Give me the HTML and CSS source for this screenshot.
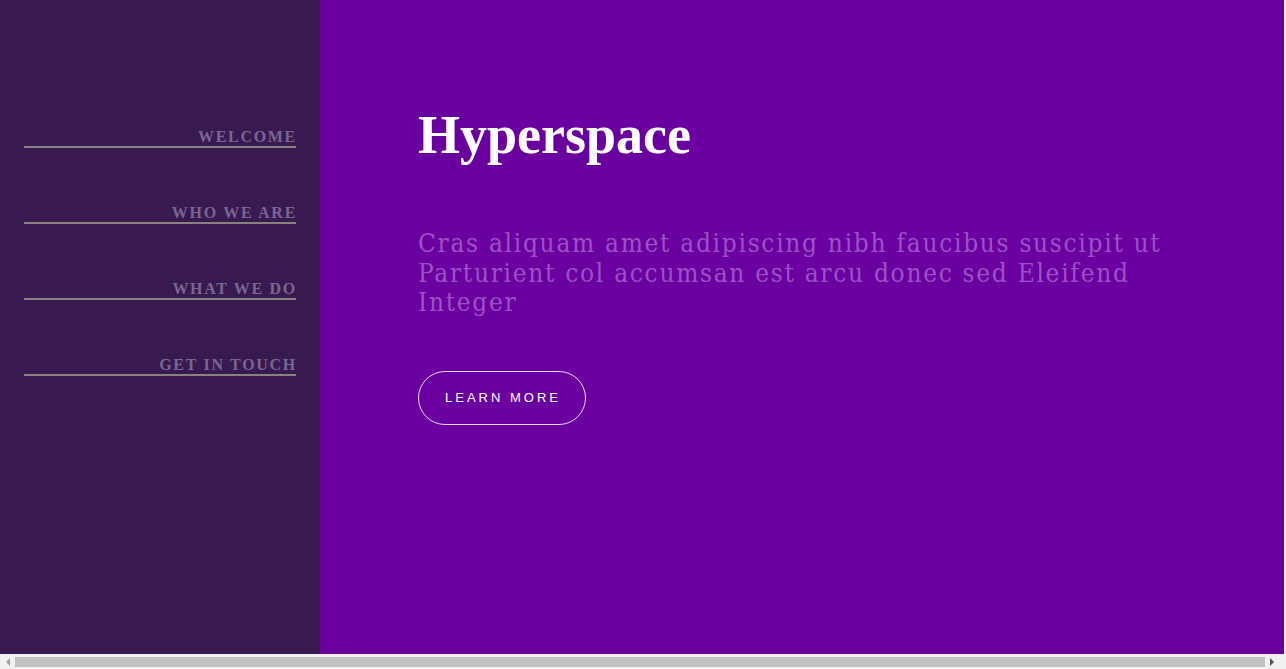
FILE: index.html
```html
<!DOCTYPE html>
<html lang="en">
<head>
<meta charset="utf-8">
<title>Hyperspace</title>
<link rel="stylesheet" href="styles.css">
</head>
<body>
<div class="page">
  <div class="content">
    <aside class="sidebar">
      <nav class="nav">
        <a class="nav-link" href="#intro"><span>Welcome</span></a>
        <a class="nav-link" href="#one"><span>Who we are</span></a>
        <a class="nav-link" href="#two"><span>What we do</span></a>
        <a class="nav-link" href="#three"><span>Get in touch</span></a>
      </nav>
    </aside>
    <main class="main">
      <h1 class="title">Hyperspace</h1>
      <p class="lead">Cras aliquam amet adipiscing nibh faucibus suscipit ut<br>Parturient col accumsan est arcu donec sed Eleifend<br>Integer</p>
      <a class="button" href="#one">Learn more</a>
    </main>
    <div class="edge"></div>
  </div>
  <div class="hscroll" aria-hidden="true">
    <div class="arrow-btn"><span class="arrow arrow-left"></span></div>
    <div class="track"><div class="thumb"></div></div>
    <div class="arrow-btn arrow-btn-right"><span class="arrow arrow-right"></span></div>
  </div>
</div>
</body>
</html>
```
FILE: styles.css
```css
html, body {
  height: 100%;
}
body {
  margin: 0;
  background: #f0f0f0;
  overflow: hidden;
}
.page {
  display: grid;
  grid-template-rows: 1fr 15px;
  height: 100%;
}
.content {
  display: grid;
  grid-template-columns: 320px 1fr 2px;
  min-height: 0;
}
.edge {
  background: #f0f0f0;
}
.sidebar {
  background: #381a50;
  padding: 129px 24px 0;
}
.nav {
  display: flex;
  flex-direction: column;
  gap: 57px;
}
.nav-link {
  display: block;
  text-align: right;
  font-family: "Liberation Serif", "Times New Roman", serif;
  font-weight: bold;
  font-size: 16px;
  line-height: 16px;
  letter-spacing: 1.7px;
  text-transform: uppercase;
  color: #7a6692;
  text-decoration: none;
  padding-bottom: 1px;
  border-bottom: 2px solid #87837f;
}
.nav-link span {
  margin-right: -1px;
}
.main {
  background: #6b00a1;
  padding: 108px 0 0 98px;
  display: flex;
  flex-direction: column;
  align-items: flex-start;
}
.title {
  margin: 0;
  font-family: "Liberation Serif", "Times New Roman", serif;
  font-weight: bold;
  font-size: 54px;
  line-height: 54px;
  color: #ffffff;
}
.lead {
  margin: 67px 0 0;
  font-family: "DejaVu Serif", serif;
  font-stretch: condensed;
  font-size: 26px;
  line-height: 29.5px;
  letter-spacing: 1.7px;
  color: #9b52c6;
}
.button {
  margin-top: 53px;
  display: inline-flex;
  align-items: center;
  height: 54px;
  box-sizing: border-box;
  padding: 0 24px 1px 26px;
  border: 1px solid #e9dcf2;
  border-radius: 27px;
  font-family: "Liberation Sans", Arial, sans-serif;
  font-size: 13px;
  letter-spacing: 3px;
  text-transform: uppercase;
  color: #ffffff;
  text-decoration: none;
}
.hscroll {
  display: flex;
  background: #f1f1f1;
}
.arrow-btn {
  width: 15px;
  flex: none;
  display: flex;
  align-items: center;
  justify-content: center;
}
.arrow-btn-right {
  width: 21px;
  justify-content: flex-start;
  padding-left: 5px;
  box-sizing: border-box;
}
.arrow {
  width: 0;
  height: 0;
  border-top: 4px solid transparent;
  border-bottom: 4px solid transparent;
}
.arrow-left {
  border-right: 4px solid #a3a3a3;
}
.arrow-right {
  border-left: 4px solid #505050;
}
.track {
  flex: 1;
  display: flex;
  align-items: center;
}
.thumb {
  width: 1250px;
  height: 10px;
  background: #c1c1c1;
}
```
